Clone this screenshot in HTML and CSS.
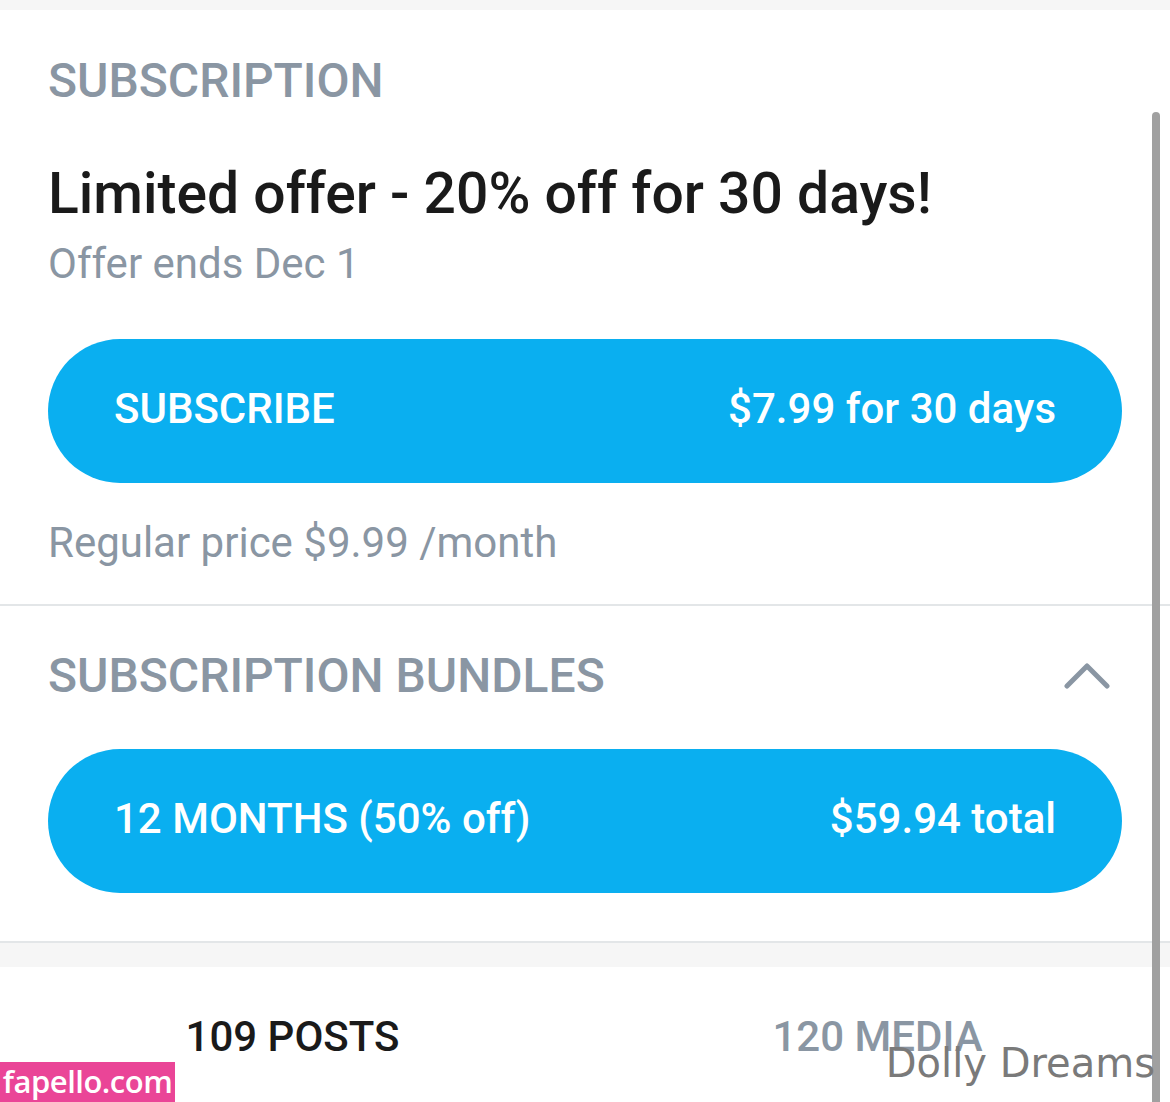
FILE: index.html
```html
<!DOCTYPE html>
<html>
<head>
<meta charset="utf-8">
<title>Subscription</title>
<link rel="stylesheet" href="styles.css">
</head>
<body>
<div class="topband"></div>
<div class="page">
  <section class="block">
    <h2 class="label first">SUBSCRIPTION</h2>
    <h1 class="offer">Limited offer - 20% off for 30 days!</h1>
    <p class="muted ends">Offer ends Dec 1</p>
    <button class="pill">
      <span>SUBSCRIBE</span>
      <span class="price">$7.99 for 30 days</span>
    </button>
    <p class="muted regular">Regular price $9.99 /month</p>
  </section>
  <section class="block bundles">
    <div class="bundle-head">
      <h2 class="label">SUBSCRIPTION BUNDLES</h2>
      <svg class="chevron" width="46" height="30" viewBox="0 0 46 30">
        <polyline points="3,25 23,5 43,25" fill="none" stroke="#8a96a3" stroke-width="5" stroke-linecap="round" stroke-linejoin="round"/>
      </svg>
    </div>
    <button class="pill">
      <span>12 MONTHS (50% off)</span>
      <span class="price">$59.94 total</span>
    </button>
  </section>
  <div class="grayband"></div>
  <nav class="tabs">
    <div class="tab active">109 POSTS</div>
    <div class="tab">120 MEDIA</div>
  </nav>
  <div class="scrollbar"></div>
  <div class="mark-site">fapello.com</div>
  <div class="mark-name">Dolly Dreams</div>
</div>
</body>
</html>
```

FILE: styles.css
```css
html, body{
    margin: 0;
    padding: 0;
    background: #fff;
    font-family: Roboto, "Liberation Sans", sans-serif;
    overflow: hidden;
}
.topband{
    height: 10px;
    background: #f6f6f6;
}
.page{
    position: relative;
    height: 1092px;
}
.block{
    padding: 0 48px;
    border-bottom: 2px solid #e3e6e8;
}
.label{
    margin: 0;
    font-size: 48px;
    font-weight: 500;
    color: #8a96a3;
    line-height: 1;
}
.first{
    padding-top: 47px;
}
.offer{
    margin: 60px 0 0 0;
    font-size: 57px;
    font-weight: 500;
    color: #1a1a1a;
    line-height: 1;
}
.muted{
    margin: 0;
    font-size: 42px;
    color: #8a96a3;
    line-height: 1;
}
.ends{
    margin-top: 21px;
}
.pill{
    display: flex;
    justify-content: space-between;
    align-items: center;
    width: 100%;
    height: 144px;
    padding: 0 66px 6px 66px;
    border: none;
    border-radius: 72px;
    background: #0aaff0;
    color: #fff;
    font-family: Roboto, "Liberation Sans", sans-serif;
    font-size: 42px;
    font-weight: 500;
    box-sizing: border-box;
}
.block .pill{
    margin-top: 54px;
}
.regular{
    margin-top: 39px;
    padding-bottom: 40px;
}
.bundles{
    padding-bottom: 48px;
}
.bundle-head{
    display: flex;
    justify-content: space-between;
    align-items: center;
    padding-top: 46px;
    padding-right: 12px;
}
.bundles .pill{
    margin-top: 49px;
}
.grayband{
    height: 24px;
    background: #f6f6f6;
}
.tabs{
    display: grid;
    grid-template-columns: 1fr 1fr;
    padding-top: 49px;
}
.tab{
    text-align: center;
    font-size: 42px;
    font-weight: 500;
    color: #8a96a3;
    line-height: 1;
}
.tab.active{
    color: #1a1a1a;
}
.scrollbar{
    position: absolute;
    top: 102px;
    right: 10px;
    width: 8px;
    height: 1000px;
    border-radius: 4px 4px 0 0;
    background: #a0a0a0;
}
.mark-site{
    position: absolute;
    left: 0;
    bottom: 0;
    width: 175px;
    height: 40px;
    background: #ea4597;
    color: #fff;
    font-family: "Open Sans", sans-serif;
    font-weight: 600;
    font-size: 31px;
    line-height: 38px;
    text-align: center;
    letter-spacing: -0.5px;
}
.mark-name{
    position: absolute;
    right: 15px;
    bottom: 19px;
    font-family: "DejaVu Sans", sans-serif;
    font-size: 40px;
    color: #7a7a7a;
    line-height: 1;
}
```
